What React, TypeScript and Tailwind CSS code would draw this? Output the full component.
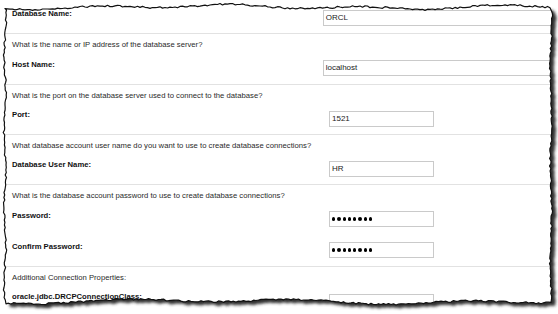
import React from "react";

type Field = { label: string; value?: string; wide?: boolean; password?: boolean; h: string; lt: string; it: string };
type Section = { question?: string; fields: Field[] };

const sections: Section[] = [
  { fields: [{ label: "Database Name:", value: "ORCL", wide: true, h: "h-[33px]", lt: "pt-[9px]", it: "mt-[10px]" }] },
  {
    question: "What is the name or IP address of the database server?",
    fields: [{ label: "Host Name:", value: "localhost", wide: true, h: "h-[29px]", lt: "pt-[5px]", it: "mt-[5px]" }],
  },
  {
    question: "What is the port on the database server used to connect to the database?",
    fields: [{ label: "Port:", value: "1521", h: "h-[28px]", lt: "pt-[4px]", it: "mt-[5px]" }],
  },
  {
    question: "What database account user name do you want to use to create database connections?",
    fields: [{ label: "Database User Name:", value: "HR", h: "h-[28px]", lt: "pt-[4px]", it: "mt-[5px]" }],
  },
  {
    question: "What is the database account password to use to create database connections?",
    fields: [
      { label: "Password:", password: true, h: "h-[31px]", lt: "pt-[5px]", it: "mt-[5px]" },
      { label: "Confirm Password:", password: true, h: "h-[29px]", lt: "pt-[5px]", it: "mt-[5px]" },
    ],
  },
  {
    question: "Additional Connection Properties:",
    fields: [{ label: "oracle.jdbc.DRCPConnectionClass:", value: "", h: "h-[30px]", lt: "pt-[4px]", it: "mt-[6px]" }],
  },
];

// seeded random so the torn edge is the same every time
function rng(seed: number) {
  return () => {
    seed = (seed + 0x6d2b79f5) | 0;
    let t = Math.imul(seed ^ (seed >>> 15), 1 | seed);
    t = (t + Math.imul(t ^ (t >>> 7), 61 | t)) ^ t;
    return ((t ^ (t >>> 14)) >>> 0) / 4294967296;
  };
}

function tornPath(): string {
  const r = rng(11);
  const jit = (a: number) => (r() - 0.5) * a;
  const pts: [number, number][] = [];
  for (let x = 5; x <= 551; x += 2.5) pts.push([x, 7 + 1.5 * Math.sin(x / 21) + 1.3 * Math.sin(x / 57 + 1) + jit(1.8)]);
  for (let y = 11; y <= 300; y += 2.5) pts.push([551 + 0.8 * Math.sin(y / 15) + jit(1.8), y]);
  for (let x = 551; x >= 5; x -= 2.5) pts.push([x, 301.5 + 1.6 * Math.sin(x / 27) + 1.4 * Math.sin(x / 73 + 2) + jit(1.8)]);
  for (let y = 300; y >= 8; y -= 2.5) pts.push([5 + 0.9 * Math.sin(y / 12) + jit(1.8), y]);
  return "M" + pts.map(([a, b]) => `${a.toFixed(1)},${b.toFixed(1)}`).join("L") + "Z";
}

const TornEdge = () => {
  const p = tornPath();
  return (
    <svg className="absolute inset-0 pointer-events-none" width={558} height={314} viewBox="0 0 558 314">
      <defs>
        <filter id="blur" x="-5%" y="-5%" width="110%" height="110%">
          <feGaussianBlur stdDeviation="1.8" />
        </filter>
        <mask id="outside">
          <rect width={558} height={314} fill="white" />
          <path d={p} fill="black" />
        </mask>
      </defs>
      <g mask="url(#outside)">
        <rect width={558} height={314} fill="white" />
        <path d={p} transform="translate(4,3.5)" fill="#2e2e2e" filter="url(#blur)" />
      </g>
      <path d={p} fill="none" stroke="#111" strokeWidth={1.2} strokeLinejoin="round" />
    </svg>
  );
};

const Dots = () => (
  <div className="flex items-center gap-[2px]">
    {Array.from({ length: 8 }).map((_, i) => (
      <span key={i} className="w-[3.3px] h-[3.3px] rounded-full bg-black" />
    ))}
  </div>
);

export default function App() {
  return (
    <div className="relative w-[558px] h-[314px] overflow-hidden bg-white font-['Liberation_Sans',Arial,sans-serif]">
      <div className="flex flex-col">
        {sections.map((s, i) => (
          <div key={i} className={i > 0 ? "border-t border-[#e2e2e2]" : ""}>
            {s.question && (
              <div className="h-[21px] flex items-center pl-[12px] text-[7.7px] text-[#2a2a2a]">{s.question}</div>
            )}
            {s.fields.map((f) => (
              <div key={f.label} className={`flex items-start ${f.h}`}>
                <div className={`w-[329px] pl-[12px] ${f.lt} text-[7.7px] leading-[10px] font-bold text-[#111]`}>
                  {f.label}
                </div>
                <div
                  className={`${f.it} h-[16px] ${f.wide ? "w-[240px]" : "w-[105px]"} border border-[#cacaca] bg-white flex items-center px-[2px] text-[8px] text-[#222]`}
                >
                  {f.password ? <Dots /> : f.value}
                </div>
              </div>
            ))}
          </div>
        ))}
      </div>
      <TornEdge />
    </div>
  );
}
